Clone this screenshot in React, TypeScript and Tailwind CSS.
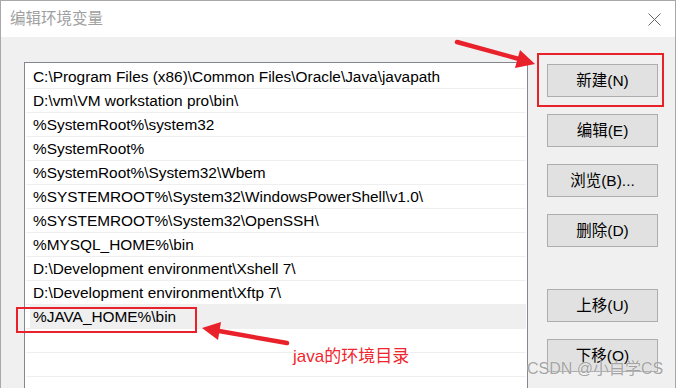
import React from "react";

const items = [
  "C:\\Program Files (x86)\\Common Files\\Oracle\\Java\\javapath",
  "D:\\vm\\VM workstation pro\\bin\\",
  "%SystemRoot%\\system32",
  "%SystemRoot%",
  "%SystemRoot%\\System32\\Wbem",
  "%SYSTEMROOT%\\System32\\WindowsPowerShell\\v1.0\\",
  "%SYSTEMROOT%\\System32\\OpenSSH\\",
  "%MYSQL_HOME%\\bin",
  "D:\\Development environment\\Xshell 7\\",
  "D:\\Development environment\\Xftp 7\\",
  "%JAVA_HOME%\\bin",
  "",
  "",
  "",
];

const font = {
  fontFamily: '"Liberation Sans", "Noto Sans CJK SC", sans-serif',
};

function Btn({ label, className = "" }: { label: string; className?: string }) {
  return (
    <div
      className={
        "w-[111px] h-[33px] shrink-0 border border-[#adadad] bg-[#e1e1e1] flex items-center justify-center text-[15.5px] text-black " +
        className
      }
    >
      {label}
    </div>
  );
}

export default function App() {
  return (
    <div className="w-[677px] h-[388px] overflow-hidden bg-white relative" style={font}>
      <div className="w-[676px] h-[388px] border-t border-l border-r border-[#a8a8a8] flex flex-col bg-[#f0f0f0]">
        <div className="h-[36px] shrink-0 bg-white flex items-center justify-between pl-[9px] pr-[14px]">
          <span className="text-[15.5px] text-[#a0a0a0] leading-none">编辑环境变量</span>
          <svg width="13" height="13" viewBox="0 0 13 13">
            <path d="M0.5 0.5 L12.5 12.5 M12.5 0.5 L0.5 12.5" stroke="#666" strokeWidth="1" fill="none" />
          </svg>
        </div>
        <div className="flex pt-[25px] pl-[23px]">
          <div className="w-[504px] h-[400px] shrink-0 border border-[#828790] bg-white pt-[2px] px-[1px]">
            {items.map((t, i) => (
              <div key={i} className="h-[24px] border-b border-[#efefef] flex">
                <div
                  className={
                    "flex-1 flex items-center text-[15.4px] text-black leading-[23px] " +
                    (i === 10 ? "bg-[#efefef] ml-[4px] pl-[3px]" : "pl-[7px]")
                  }
                >
                  {t}
                </div>
              </div>
            ))}
          </div>
          <div className="ml-[19px] mt-[2px] flex flex-col gap-[17px]">
            <Btn label="新建(N)" />
            <Btn label="编辑(E)" />
            <Btn label="浏览(B)..." />
            <Btn label="删除(D)" />
            <Btn label="上移(U)" className="mt-[25px]" />
            <Btn label="下移(O)" />
          </div>
        </div>
      </div>

      {/* annotation boxes */}
      <div className="absolute left-[537px] top-[53px] w-[127px] h-[54px] border-2 border-[#e8212a]" />
      <div className="absolute left-[16px] top-[307px] w-[181px] h-[26px] border-2 border-[#e8212a]" />

      {/* arrows */}
      <svg className="absolute left-0 top-0" width="677" height="388" viewBox="0 0 677 388">
        <path d="M457 42 L519 59" stroke="#e8212a" strokeWidth="4.5" strokeLinecap="round" fill="none" />
        <polygon points="535,64 515,68 520,50" fill="#e8212a" />
        <path d="M287 343 L219 331" stroke="#e8212a" strokeWidth="4.5" strokeLinecap="round" fill="none" />
        <polygon points="202,328 221,322 218,340" fill="#e8212a" />
      </svg>

      <div className="absolute left-[293px] top-[346px] text-[17px] leading-[22px] text-[#f0262f]">
        java的环境目录
      </div>

      <div
        className="absolute left-[527px] top-[359px] text-[16px] leading-[20px] text-[#8c8c8c]/80"
        style={{ textShadow: "0 0 1px #fff" }}
      >
        CSDN @小白学CS
      </div>
    </div>
  );
}
